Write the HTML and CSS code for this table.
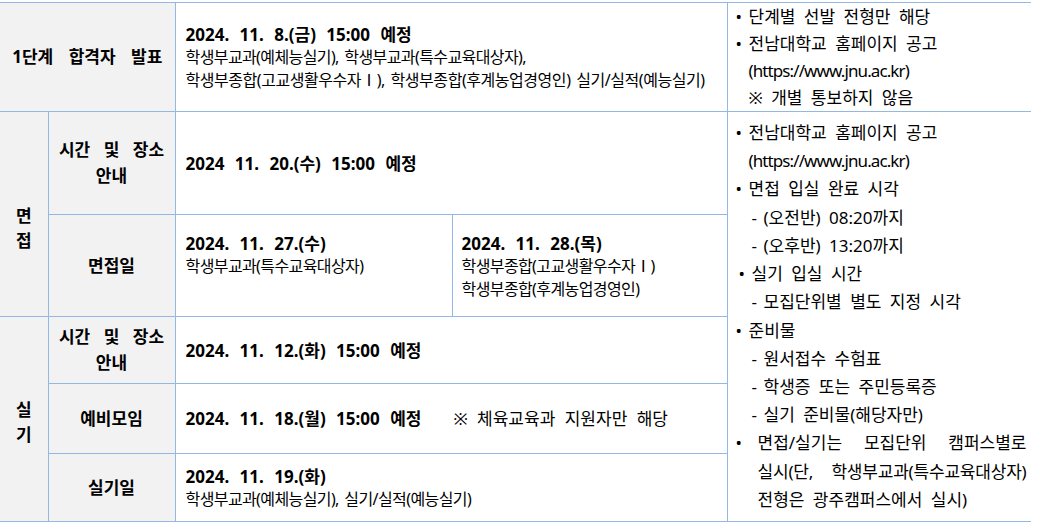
FILE: index.html
```html
<!DOCTYPE html>
<html lang="ko">
<head>
<meta charset="utf-8">
<title>전형 일정</title>
<link rel="stylesheet" href="styles.css">
</head>
<body>
<div class="page">
<table class="sched">
  <colgroup>
    <col class="w1"><col class="w2"><col class="w3"><col class="w4"><col class="w5">
  </colgroup>
  <tr class="r1">
    <th colspan="2" class="lab wide">1단계 합격자 발표</th>
    <td colspan="2" class="main">
      <div class="date">2024. 11. 8.(금) 15:00 예정</div>
      <div class="reg">학생부교과(예체능실기), 학생부교과(특수교육대상자),</div>
      <div class="reg tight">학생부종합(고교생활우수자Ⅰ), 학생부종합(후계농업경영인) 실기/실적(예능실기)</div>
    </td>
    <td class="note note1">
      <div class="ln"><span class="bul">•</span>단계별 선발 전형만 해당</div>
      <div class="ln"><span class="bul">•</span>전남대학교 홈페이지 공고</div>
      <div class="ln ind url">(https://www.jnu.ac.kr)</div>
      <div class="ln ind">※ 개별 통보하지 않음</div>
    </td>
  </tr>
  <tr class="r2">
    <th rowspan="2" class="grp grp-a">면<br>접</th>
    <th class="lab two">시간 및 장소<br>안내</th>
    <td colspan="2" class="main"><div class="date">2024 11. 20.(수) 15:00 예정</div></td>
    <td rowspan="5" class="note note2">
      <div class="ln"><span class="bul">•</span>전남대학교 홈페이지 공고</div>
      <div class="ln ind url">(https://www.jnu.ac.kr)</div>
      <div class="ln"><span class="bul">•</span>면접 입실 완료 시각</div>
      <div class="ln sub"><span class="dash">-</span>(오전반) 08:20까지</div>
      <div class="ln sub"><span class="dash">-</span>(오후반) 13:20까지</div>
      <div class="ln shift"><span class="bul">•</span>실기 입실 시간</div>
      <div class="ln sub"><span class="dash">-</span>모집단위별 별도 지정 시각</div>
      <div class="ln"><span class="bul">•</span>준비물</div>
      <div class="ln sub"><span class="dash">-</span>원서접수 수험표</div>
      <div class="ln sub"><span class="dash">-</span>학생증 또는 주민등록증</div>
      <div class="ln sub"><span class="dash">-</span>실기 준비물(해당자만)</div>
      <div class="ln just first"><span class="bul">•</span><span class="jw"><span>면접/실기는</span><span>모집단위</span><span>캠퍼스별로</span></span></div>
      <div class="ln just hang"><span class="jw"><span>실시(단,</span><span>학생부교과(특수교육대상자)</span></span></div>
      <div class="ln hang">전형은 광주캠퍼스에서 실시)</div>
    </td>
  </tr>
  <tr class="r3">
    <th class="lab">면접일</th>
    <td class="main top">
      <div class="date">2024. 11. 27.(수)</div>
      <div class="reg">학생부교과(특수교육대상자)</div>
    </td>
    <td class="main top sec">
      <div class="date">2024. 11. 28.(목)</div>
      <div class="reg">학생부종합(고교생활우수자Ⅰ)</div>
      <div class="reg">학생부종합(후계농업경영인)</div>
    </td>
  </tr>
  <tr class="r4">
    <th rowspan="3" class="grp grp-b">실<br>기</th>
    <th class="lab two">시간 및 장소<br>안내</th>
    <td colspan="2" class="main"><div class="date">2024. 11. 12.(화) 15:00 예정</div></td>
  </tr>
  <tr class="r5">
    <th class="lab">예비모임</th>
    <td colspan="2" class="main"><div class="date">2024. 11. 18.(월) 15:00 예정<span class="remark">※ 체육교육과 지원자만 해당</span></div></td>
  </tr>
  <tr class="r6">
    <th class="lab">실기일</th>
    <td colspan="2" class="main">
      <div class="date">2024. 11. 19.(화)</div>
      <div class="reg">학생부교과(예체능실기), 실기/실적(예능실기)</div>
    </td>
  </tr>
</table>
<div class="next">
  <span class="nc n1"></span><span class="nc n2"></span><span class="nc n3"></span><span class="nc n4"></span><span class="nc n5"></span><span class="nc n6"></span>
</div>
</div>
</body>
</html>
```
FILE: styles.css
```css
html, body {
  margin: 0;
  padding: 0;
  background: #ffffff;
}
body {
  font-family: "Noto Sans", "Noto Sans CJK KR", sans-serif;
  color: #000;
}
.page {
  padding-top: 2px;
  width: 1042px;
}
.sched {
  border-collapse: collapse;
  table-layout: fixed;
  width: 1031px;
}
.w1 { width: 48px; }
.w2 { width: 127px; }
.w3 { width: 277px; }
.w4 { width: 275px; }
.w5 { width: 304px; }

.sched th, .sched td {
  border: 1px solid #94b8e4;
  padding: 0;
  vertical-align: middle;
}
.sched tr > :first-child { border-left: none; }
.sched .note { border-right: none; }

.r1 { height: 108px; }
.r2 { height: 103px; }
.r3 { height: 102px; }
.r4 { height: 67px; }
.r5 { height: 70px; }
.r6 { height: 68px; }

.sched th {
  background: #f2f2f2;
  font-weight: 700;
  font-size: 17px;
  text-align: center;
  word-spacing: 9px;
}
.sched .lab.wide { word-spacing: 11px; }
.sched .lab { line-height: 26px; }
.sched .grp { line-height: 25px; }
.sched .grp-a { padding-top: 27px; }
.sched .grp-b { padding-top: 6px; }

.sched .main {
  padding-left: 10px;
  text-align: left;
}
.sched .main.sec { padding-left: 9px; }
.sched .main.top { vertical-align: top; padding-top: 17px; }
.date {
  font-weight: 700;
  font-size: 17px;
  line-height: 23px;
  word-spacing: 6px;
  letter-spacing: 0;
}
.reg {
  font-size: 16px;
  line-height: 23px;
  letter-spacing: -0.6px;
  word-spacing: 2px;
}
.reg.tight { letter-spacing: -0.45px; }
.remark {
  font-weight: 400;
  font-size: 17px;
  margin-left: 32px;
  word-spacing: 5px;
}

.sched .note {
  font-size: 17px;
  padding-left: 8px;
  vertical-align: middle;
}
.note1 .ln { line-height: 27px; }
.note2 .ln { line-height: 28.2px; }
.ln {
  white-space: nowrap;
  word-spacing: 4px;
}
.bul {
  display: inline-block;
  width: 13px;
}
.ind { padding-left: 13px; }
.url { letter-spacing: -0.9px; }
.sub { padding-left: 16px; }
.dash {
  display: inline-block;
  width: 12px;
}
.shift { padding-left: 3px; }
.just {
  display: flex;
  width: 291px;
}
.jw {
  flex: 1;
  display: flex;
  justify-content: space-between;
}
.first .bul { width: 22px; }
.hang { padding-left: 22px; }
.just.hang { width: 269px; letter-spacing: -0.2px; }

.next {
  display: flex;
  height: 10px;
  border-top: 1px solid #94b8e4;
  width: 1031px;
}
.nc {
  display: block;
  border-right: 1px solid #94b8e4;
}
.n1 { width: 47px; }
.n2 { width: 126px; }
.n3 { width: 69px; }
.n4 { width: 62px; }
.n5 { width: 418px; }
.n6 { flex: 1; border-right: none; }
```
